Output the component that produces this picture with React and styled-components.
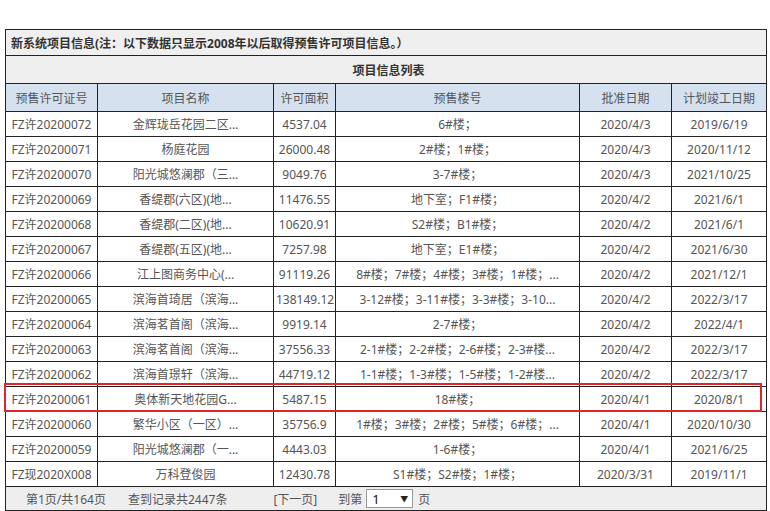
import React from "react";
import styled, { createGlobalStyle } from "styled-components";

const GlobalStyle = createGlobalStyle`
  body {
    margin: 0;
    background: #fff;
    font-family: "Noto Sans", "Noto Sans CJK SC", sans-serif;
  }
`;

const Page = styled.div`
  padding: 29px 0 0 5px;
`;

const Frame = styled.div`
  position: relative;
  width: 761px;
`;

const Table = styled.table`
  width: 761px;
  table-layout: fixed;
  border-collapse: collapse;
  border: 1px solid #222;
  font-size: 12px;
  color: #555;
`;

const TitleCell = styled.td`
  height: 25px;
  padding: 0 0 0 5px;
  background: #efefef;
  border: 1px solid #222;
  font-weight: bold;
  color: #333;
  text-align: ${(p) => (p.$center ? "center" : "left")};
  white-space: nowrap;
`;

const HeadCell = styled.th`
  height: 27px;
  padding: 0;
  background: #d5e1ee;
  border: 1px solid #222;
  font-weight: normal;
  color: #555;
  text-align: center;
`;

const Cell = styled.td`
  height: 24px;
  padding: 0 2px;
  border: 1px solid #222;
  text-align: center;
  white-space: nowrap;
  overflow: hidden;
`;

const FooterCell = styled.td`
  height: 23px;
  padding: 0;
  background: #eeeeee;
  border: 1px solid #222;
`;

const Pager = styled.div`
  display: flex;
  align-items: center;
  padding-left: 20px;
  color: #555;
`;

const PagerItem = styled.span`
  margin-right: ${(p) => p.$gap}px;
`;

const PageSelect = styled.span`
  display: inline-flex;
  align-items: center;
  justify-content: space-between;
  box-sizing: border-box;
  width: 47px;
  height: 19px;
  margin: 0 5px 0 4px;
  padding: 0 4px 0 5px;
  background: #fff;
  border: 1px solid #999;
  color: #111;
  font-size: 13px;
`;

const Arrow = styled.span`
  font-size: 8px;
  color: #222;
`;

const Highlight = styled.div`
  position: absolute;
  top: 354px;
  left: -1px;
  width: 758px;
  height: 29px;
  box-sizing: border-box;
  border: 2px solid #e0262b;
  pointer-events: none;
`;

const widths = [92, 176, 62, 244, 92, 95];
const headers = ["预售许可证号", "项目名称", "许可面积", "预售楼号", "批准日期", "计划竣工日期"];

const rows = [
  ["FZ许20200072", "金辉珑岳花园二区...", "4537.04", "6#楼；", "2020/4/3", "2019/6/19"],
  ["FZ许20200071", "杨庭花园", "26000.48", "2#楼；1#楼；", "2020/4/3", "2020/11/12"],
  ["FZ许20200070", "阳光城悠澜郡（三...", "9049.76", "3-7#楼；", "2020/4/3", "2021/10/25"],
  ["FZ许20200069", "香缇郡(六区)(地...", "11476.55", "地下室；F1#楼；", "2020/4/2", "2021/6/1"],
  ["FZ许20200068", "香缇郡(二区)(地...", "10620.91", "S2#楼；B1#楼；", "2020/4/2", "2021/6/1"],
  ["FZ许20200067", "香缇郡(五区)(地...", "7257.98", "地下室；E1#楼；", "2020/4/2", "2021/6/30"],
  ["FZ许20200066", "江上图商务中心(...", "91119.26", "8#楼；7#楼；4#楼；3#楼；1#楼；...", "2020/4/2", "2021/12/1"],
  ["FZ许20200065", "滨海首琦居（滨海...", "138149.12", "3-12#楼；3-11#楼；3-3#楼；3-10...", "2020/4/2", "2022/3/17"],
  ["FZ许20200064", "滨海茗首阁（滨海...", "9919.14", "2-7#楼；", "2020/4/2", "2022/4/1"],
  ["FZ许20200063", "滨海茗首阁（滨海...", "37556.33", "2-1#楼；2-2#楼；2-6#楼；2-3#楼...", "2020/4/2", "2022/3/17"],
  ["FZ许20200062", "滨海首璟轩（滨海...", "44719.12", "1-1#楼；1-3#楼；1-5#楼；1-2#楼...", "2020/4/2", "2022/3/17"],
  ["FZ许20200061", "奥体新天地花园G...", "5487.15", "18#楼；", "2020/4/1", "2020/8/1"],
  ["FZ许20200060", "繁华小区（一区）...", "35756.9", "1#楼；3#楼；2#楼；5#楼；6#楼；...", "2020/4/1", "2020/10/30"],
  ["FZ许20200059", "阳光城悠澜郡（一...", "4443.03", "1-6#楼；", "2020/4/1", "2021/6/25"],
  ["FZ现2020X008", "万科登俊园", "12430.78", "S1#楼；S2#楼；1#楼；", "2020/3/31", "2019/11/1"],
];

export default function App() {
  return (
    <Page>
      <GlobalStyle />
      <Frame>
        <Table>
          <colgroup>
            {widths.map((w, i) => (
              <col key={i} style={{ width: w }} />
            ))}
          </colgroup>
          <tbody>
            <tr>
              <TitleCell colSpan={6}>新系统项目信息(注：以下数据只显示2008年以后取得预售许可项目信息。）</TitleCell>
            </tr>
            <tr>
              <TitleCell colSpan={6} $center style={{ height: 27 }}>项目信息列表</TitleCell>
            </tr>
            <tr>
              {headers.map((h) => (
                <HeadCell key={h}>{h}</HeadCell>
              ))}
            </tr>
            {rows.map((r) => (
              <tr key={r[0]}>
                {r.map((c, i) => (
                  <Cell key={i}>{c}</Cell>
                ))}
              </tr>
            ))}
            <tr>
              <FooterCell colSpan={6}>
                <Pager>
                  <PagerItem $gap={22}>第1页/共164页</PagerItem>
                  <PagerItem $gap={46}>查到记录共2447条</PagerItem>
                  <PagerItem $gap={21}>[下一页]</PagerItem>
                  <span>到第</span>
                  <PageSelect>
                    1<Arrow>▼</Arrow>
                  </PageSelect>
                  <span>页</span>
                </Pager>
              </FooterCell>
            </tr>
          </tbody>
        </Table>
        <Highlight />
      </Frame>
    </Page>
  );
}
